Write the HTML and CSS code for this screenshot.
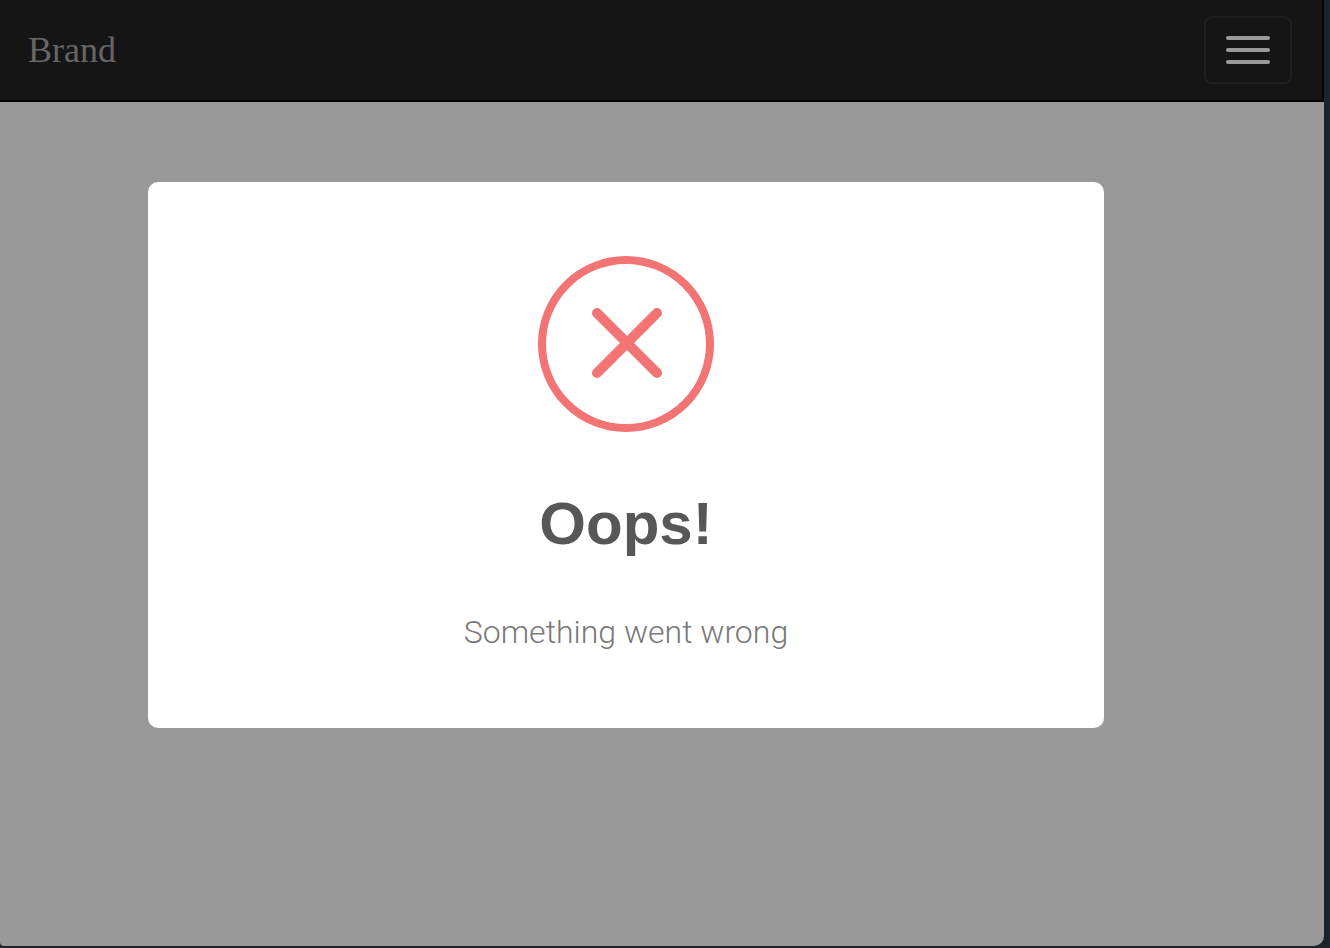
FILE: index.html
```html
<!DOCTYPE html>
<html lang="en">
<head>
<meta charset="utf-8">
<meta name="viewport" content="width=device-width, initial-scale=1">
<title>Brand</title>
<link rel="stylesheet" href="styles.css">
</head>
<body>
<div class="window">
  <header class="navbar">
    <a class="brand" href="#">Brand</a>
    <button class="toggle" type="button" aria-label="Toggle navigation">
      <span class="bar"></span>
      <span class="bar"></span>
      <span class="bar"></span>
    </button>
  </header>
  <main class="content">
    <section class="alert" role="alertdialog" aria-labelledby="alert-title" aria-describedby="alert-text">
      <svg class="alert-icon" viewBox="0 0 176 176" aria-hidden="true">
        <circle cx="88" cy="88" r="84" stroke-width="8"/>
        <path d="M59 57l60 60M119 57l-60 60" stroke-width="10" stroke-linecap="round"/>
      </svg>
      <h2 class="alert-title" id="alert-title">Oops!</h2>
      <p class="alert-text" id="alert-text">Something went wrong</p>
    </section>
  </main>
</div>
</body>
</html>
```
FILE: styles.css
```css
* {
  box-sizing: border-box;
}

body {
  margin: 0;
  min-height: 100vh;
  padding: 0 6px 2px 0;
  display: flex;
  background: #1b242a;
}

.window {
  flex: 1;
  display: flex;
  flex-direction: column;
  overflow: hidden;
  background: #999;
  border-radius: 0 0 10px 4px;
}

.navbar {
  display: flex;
  align-items: center;
  justify-content: space-between;
  padding: 16px 30px 16px 28px;
  background: #151515;
  border-right: 2px solid #050505;
  border-bottom: 2px solid #050505;
}

.brand {
  color: #666;
  font-family: "Liberation Serif", "Times New Roman", serif;
  font-size: 36px;
  line-height: 40px;
  text-decoration: none;
}

.toggle {
  display: flex;
  flex-direction: column;
  gap: 8px;
  padding: 18px 20px;
  background: transparent;
  border: 2px solid #1f1f1f;
  border-radius: 8px;
}

.bar {
  width: 44px;
  height: 4px;
  background: #999;
  border-radius: 2px;
}

.content {
  flex: 1;
  padding: 80px 220px 80px 148px;
}

.alert {
  display: flex;
  flex-direction: column;
  align-items: center;
  padding: 74px 34px;
  background: #fff;
  border-radius: 10px;
  text-align: center;
}

.alert-icon {
  width: 176px;
  height: 176px;
  fill: none;
  stroke: #f27474;
}

.alert-title {
  margin: 52px 0 46px;
  color: #575757;
  font-family: "Liberation Sans", Helvetica, Arial, sans-serif;
  font-size: 60px;
  line-height: 80px;
}

.alert-text {
  margin: 0;
  color: #797979;
  font-family: Roboto, "Helvetica Neue", sans-serif;
  font-size: 32px;
  font-weight: 300;
  line-height: 44px;
}
```
